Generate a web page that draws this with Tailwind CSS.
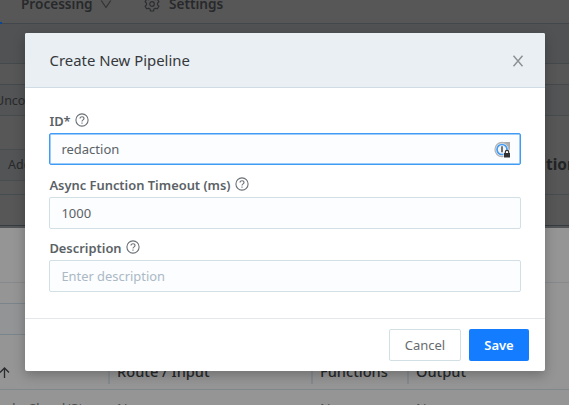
<!DOCTYPE html>
<html lang="en">
<head>
<meta charset="utf-8">
<title>Create New Pipeline</title>
<script src="https://cdn.jsdelivr.net/npm/@tailwindcss/browser@4"></script>
</head>
<body class="relative h-[405px] w-[569px] overflow-hidden bg-[#959595] font-['Noto_Sans','Open_Sans',sans-serif] text-[13px] text-[#5b6266]">
  <!-- Dimmed page -->
  <div class="flex h-[405px] w-full flex-col overflow-hidden text-[#27292b]">
    <nav class="relative flex h-6 shrink-0 items-start border-b border-[#42474b] bg-[#575757] pl-[21px] text-[13.600px] leading-[18px] font-semibold">
      <span class="-mt-[5px] w-[73px]">Processing</span>
      <svg class="ml-[6px] h-3 w-3" viewBox="0 0 12 12" fill="none" stroke="#303234" stroke-width="1.2"><path d="M1.2 0.5 6 7.5 10.8 0.5"/></svg>
      <svg class="-mt-[4px] ml-[32px] h-4 w-4" viewBox="0 0 16 16" fill="none" stroke="#2b2d2f" stroke-width="1.2" stroke-linejoin="round"><path d="M6.5 1h3l.5 2 1.4.8 2-.6 1.5 2.6L13.500 7.200v1.600l1.400 1.400-1.500 2.600-2-.6-1.400.8-.5 2h-3l-.5-2-1.400-.8-2 .6-1.500-2.600 1.400-1.400V7.200L1.100 5.800l1.500-2.600 2 .6L6 3z"/><circle cx="8" cy="8" r="2.300"/></svg>
      <span class="-mt-[5px] ml-[9px]">Settings</span>
      <i class="absolute -bottom-px left-0 h-[2px] w-[2px] bg-[#0b4797]"></i>
    </nav>
    <div class="h-10 shrink-0 border-b border-[#44494c] bg-[#505254]"></div>
    <div class="h-[21px] shrink-0 border-b border-[#43494c] bg-[#575757]"></div>
    <div class="h-[31px] shrink-0 border-b border-[#464b4e] bg-[#535455] text-[12.500px] leading-[31px]"><span class="-ml-[5px]">Uncommitted</span></div>
    <div class="flex h-[79px] shrink-0 items-center justify-between border-b border-[#464d50] bg-[#575757]">
      <div class="mt-[20px] h-8 w-[60px] border-y border-[#484d4f] bg-[#535455] pl-2 text-[12.500px] leading-[29px]">Add</div>
      <div class="mt-[20px] w-[30px] pl-[7px] text-[15.500px] font-bold text-[#222425]">tions</div>
    </div>
    <div class="flex h-[33px] shrink-0 flex-col justify-end bg-[#575757]"><div class="h-px bg-[#353c42]"></div><div class="h-[2px] bg-[#525456]"></div></div>
    <div class="h-[55px] shrink-0 border-b border-[#868a8c]"></div>
    <div class="mt-5 h-8 w-[80px] shrink-0 border-y border-[#7a858b] bg-[#929496]"></div>
    <div class="flex h-[55px] shrink-0 items-end border-b border-[#7e878a] pb-[5px] text-[14.600px] leading-[25px] font-medium">
      <span class="flex h-[25px] w-[108px] items-center"><svg class="mt-[2px] -ml-[1px] h-[11px] w-[11px]" viewBox="0 0 11 11" fill="none" stroke="#292b2d" stroke-width="1.3"><path d="M5.500 11V1M1 5.500 5.500 1 10 5.500"/></svg></span>
      <span class="h-[25px] w-[203px] border-l-2 border-[#848b8f] pl-[7px]">Route / Input</span>
      <span class="h-[25px] w-[96px] border-l-2 border-[#848b8f] pl-[7px]">Functions</span>
      <span class="h-[25px] border-l-2 border-[#848b8f] pl-[7px]">Output</span>
    </div>
    <div class="flex shrink-0 pt-[9px] text-[14px] leading-5 text-[#4c4e50]">
      <span class="w-[117px] pl-[7px] whitespace-nowrap">da Cloud/Str</span><span class="w-[203px]">None</span><span class="w-[96px]">None</span><span>None</span>
    </div>
  </div>

  <!-- Dialog -->
  <section class="absolute top-[33px] left-[25px] flex h-[338px] w-[520px] flex-col overflow-hidden rounded-[2px] bg-white shadow-[0_4px_12px_rgba(0,0,0,0.25)]">
    <header class="flex h-[55px] shrink-0 items-center justify-between border-b border-[#cfdce3] bg-[#eaeff3] pr-[21px] pl-[24.500px]">
      <h1 class="text-[14.900px] text-[#35393c]">Create New Pipeline</h1>
      <svg class="mt-[2px] h-3 w-3" viewBox="0 0 12 12" fill="none" stroke="#8b9093" stroke-width="1.400"><path d="M1.500 .7 10.500 11.300M10.500 .7 1.500 11.300"/></svg>
    </header>
    <form class="flex h-[230px] shrink-0 flex-col pt-[23px] pr-6 pl-[24.400px]">
      <label class="flex h-[22px] items-start gap-1 text-[12.900px] leading-5 font-semibold">ID*
        <svg class="mt-[2px] h-[14px] w-[14px]" viewBox="0 0 14 14" fill="none" stroke="#697074" stroke-width="1.100"><circle cx="7" cy="7" r="6.100"/><path d="M5 5.600C5 3.100 9 3.100 9 5.600 9 7 7 6.800 7 8.500M7 9.600v1.200"/></svg></label>
      <div class="flex h-8 items-center justify-between rounded-[2px] border border-[#409bf5] bg-[#fbfdff] pr-[9px] pl-[11px] shadow-[inset_0_0_0_0.500px_#409bf5]"><span class="pt-px">redaction</span>
        <svg class="h-[17px] w-[17px]" viewBox="0 0 17 17" fill="none"><path d="M8 1h8v8z" fill="#aaa"/><circle cx="8" cy="8.500" r="7" stroke="#b4b4b4" stroke-width="1.300" fill="#f3f4f5"/><circle cx="8" cy="8.500" r="5" stroke="#459df3" stroke-width="1.700"/><path d="M8 5.300v6" stroke="#666" stroke-width="1.800"/><path d="M9.500 9.500H17v7H9.500z" fill="#fff"/><path d="M10 12h6v4.500h-6z" fill="#333"/><path d="M11.300 12v-1a1.700 1.700 0 0 1 3.400 0v1" stroke="#333" stroke-width="1.200"/></svg></div>
      <label class="mt-[10px] flex h-[22px] items-start gap-1 text-[12.900px] leading-5 font-semibold">Async Function Timeout (ms)
        <svg class="mt-[2px] h-[14px] w-[14px]" viewBox="0 0 14 14" fill="none" stroke="#697074" stroke-width="1.100"><circle cx="7" cy="7" r="6.100"/><path d="M5 5.600C5 3.100 9 3.100 9 5.600 9 7 7 6.800 7 8.500M7 9.600v1.200"/></svg></label>
      <div class="flex h-8 items-center rounded-[2px] border border-[#d2dfe5] bg-[#fbfdff] pt-px pl-[11px]">1000</div>
      <label class="mt-[9px] flex h-[22px] items-start gap-1 text-[12.900px] leading-5 font-semibold">Description
        <svg class="mt-[2px] h-[14px] w-[14px]" viewBox="0 0 14 14" fill="none" stroke="#697074" stroke-width="1.100"><circle cx="7" cy="7" r="6.100"/><path d="M5 5.600C5 3.100 9 3.100 9 5.600 9 7 7 6.800 7 8.500M7 9.600v1.200"/></svg></label>
      <div class="flex h-8 items-center rounded-[2px] border border-[#d2dfe5] bg-[#fbfdff] pt-px pl-[11px] text-[12.900px] text-[#abb9c5]">Enter description</div>
    </form>
    <footer class="flex flex-1 items-center justify-end gap-2 border-t border-[#e5e8ea] pr-4">
      <button class="h-8 w-[72px] rounded-[2px] border border-[#d2dfe5] pt-px text-[#686b6d]">Cancel</button>
      <button class="h-8 w-[60px] rounded-[2px] bg-[#147dff] pt-px font-semibold text-white">Save</button>
    </footer>
  </section>
</body>
</html>
